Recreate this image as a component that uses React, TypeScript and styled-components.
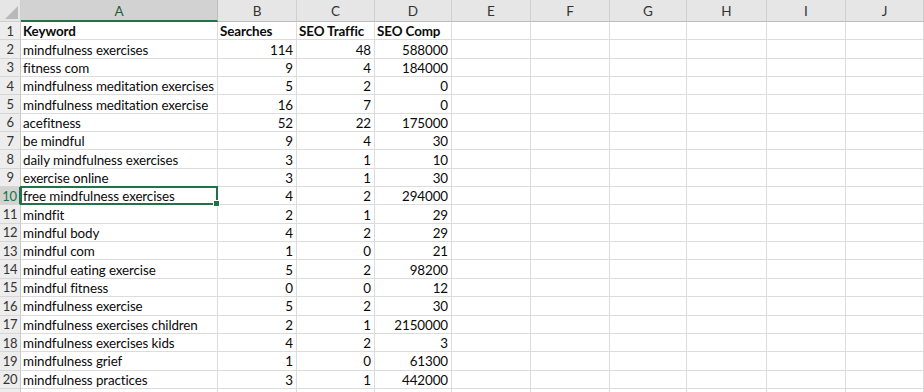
import React from "react";
import styled, { createGlobalStyle } from "styled-components";

const Global = createGlobalStyle`
  html, body { margin: 0; padding: 0; background: #ffffff; }
  body { font-family: "Lato", "Liberation Sans", sans-serif; }
`;

const COLS = [21, 197, 79, 78, 77, 79, 79, 77, 80, 79, 78];
const LETTERS = ["A", "B", "C", "D", "E", "F", "G", "H", "I", "J"];
const ROW_H = 18.35;
const SELECTED_ROW = 10;
const VISIBLE_ROWS = 20;

const rows: [string, string, string, string][] = [
  ["Keyword", "Searches", "SEO Traffic", "SEO Comp"],
  ["mindfulness exercises", "114", "48", "588000"],
  ["fitness com", "9", "4", "184000"],
  ["mindfulness meditation exercises", "5", "2", "0"],
  ["mindfulness meditation exercise", "16", "7", "0"],
  ["acefitness", "52", "22", "175000"],
  ["be mindful", "9", "4", "30"],
  ["daily mindfulness exercises", "3", "1", "10"],
  ["exercise online", "3", "1", "30"],
  ["free mindfulness exercises", "4", "2", "294000"],
  ["mindfit", "2", "1", "29"],
  ["mindful body", "4", "2", "29"],
  ["mindful com", "1", "0", "21"],
  ["mindful eating exercise", "5", "2", "98200"],
  ["mindful fitness", "0", "0", "12"],
  ["mindfulness exercise", "5", "2", "30"],
  ["mindfulness exercises children", "2", "1", "2150000"],
  ["mindfulness exercises kids", "4", "2", "3"],
  ["mindfulness grief", "1", "0", "61300"],
  ["mindfulness practices", "3", "1", "442000"],
  ["", "", "", ""],
];

const Sheet = styled.div`
  width: 924px;
  height: 392px;
  overflow: hidden;
  display: grid;
  grid-template-columns: ${COLS.map((c) => c + "px").join(" ")};
  grid-template-rows: 22px repeat(${rows.length}, ${ROW_H}px);
  background: #ffffff;
  font-size: 13.4px;
  letter-spacing: -0.1px;
  color: #0a0a0a;
`;

const Corner = styled.div`
  position: relative;
  background: #e6e6e6;
  border-right: 1px solid #cfcfcf;
  border-bottom: 1px solid #cfcfcf;
  &::after {
    content: "";
    position: absolute;
    right: 2px;
    bottom: 2px;
    width: 0;
    height: 0;
    border-left: 13px solid transparent;
    border-bottom: 13px solid #b9b9b9;
  }
`;

const ColHead = styled.div<{ $sel?: boolean }>`
  display: flex;
  align-items: center;
  justify-content: center;
  padding-top: 1px;
  background: ${(p) => (p.$sel ? "#d2d2d2" : "#e6e6e6")};
  color: ${(p) => (p.$sel ? "#1e5e3a" : "#333")};
  border-right: 1px solid ${(p) => (p.$sel ? "#bdbdbd" : "#cfcfcf")};
  border-bottom: ${(p) => (p.$sel ? "2px solid #217346" : "1px solid #bdbdbd")};
  font-size: 13.5px;
  letter-spacing: 0;
`;

const RowHead = styled.div<{ $sel?: boolean }>`
  display: flex;
  align-items: center;
  justify-content: center;
  background: ${(p) => (p.$sel ? "#d2d2d2" : "#ededed")};
  color: ${(p) => (p.$sel ? "#217346" : "#333")};
  border-right: ${(p) => (p.$sel ? "2px solid #217346" : "1px solid #c8c8c8")};
  border-bottom: 1px solid #d6d6d6;
  font-size: 13px;
  letter-spacing: -0.3px;
`;

const Cell = styled.div<{ $num?: boolean; $bold?: boolean }>`
  display: flex;
  align-items: center;
  justify-content: ${(p) => (p.$num ? "flex-end" : "flex-start")};
  padding: 1px 3px 0 2px;
  border-right: 1px solid #dcdcdc;
  border-bottom: 1px solid #dcdcdc;
  white-space: nowrap;
  overflow: visible;
  font-weight: ${(p) => (p.$bold ? 700 : 400)};
  min-width: 0;
`;

const SelectedCell = styled(Cell)`
  position: relative;
  &::before {
    content: "";
    position: absolute;
    left: -1px;
    top: -1px;
    right: -1px;
    bottom: -1px;
    border: 2px solid #217346;
    pointer-events: none;
  }
  &::after {
    content: "";
    position: absolute;
    right: -3px;
    bottom: -3px;
    width: 5px;
    height: 5px;
    background: #217346;
    border: 1px solid #fff;
  }
`;

export default function App() {
  return (
    <>
      <Global />
      <Sheet>
        <Corner />
        {LETTERS.map((l, i) => (
          <ColHead key={l} $sel={i === 0}>
            {l}
          </ColHead>
        ))}
        {rows.map((r, ri) => {
          const n = ri + 1;
          const header = ri === 0;
          const isSel = n === SELECTED_ROW;
          return (
            <React.Fragment key={n}>
              <RowHead $sel={isSel}>{n <= VISIBLE_ROWS ? n : ""}</RowHead>
              {isSel ? (
                <SelectedCell>{r[0]}</SelectedCell>
              ) : (
                <Cell $bold={header}>{r[0]}</Cell>
              )}
              <Cell $num={!header} $bold={header}>{r[1]}</Cell>
              <Cell $num={!header} $bold={header}>{r[2]}</Cell>
              <Cell $num={!header} $bold={header}>{r[3]}</Cell>
              {Array.from({ length: 6 }).map((_, k) => (
                <Cell key={k} />
              ))}
            </React.Fragment>
          );
        })}
      </Sheet>
    </>
  );
}
